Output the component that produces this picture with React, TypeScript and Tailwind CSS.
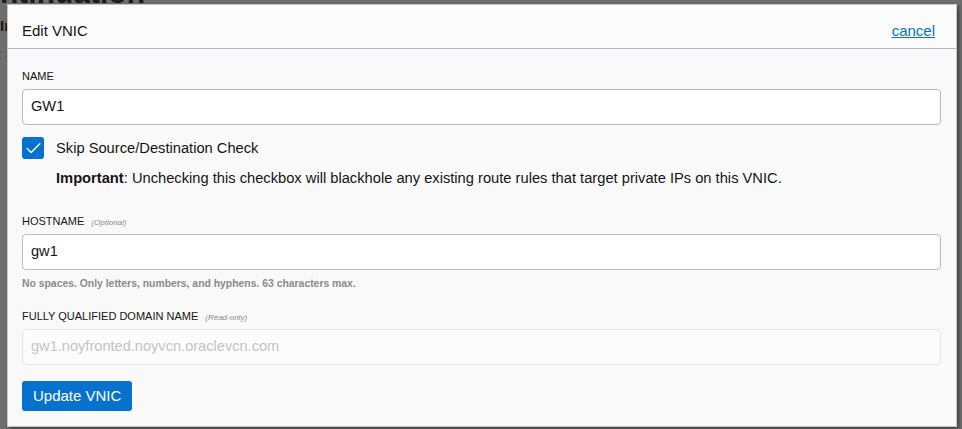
import { Check } from "lucide-react";

const font = { fontFamily: '"Liberation Sans", Arial, sans-serif' };

function Field({ label, note, children }: { label: string; note?: string; children: React.ReactNode }) {
  return (
    <div className="flex flex-col">
      <div className="flex items-baseline gap-[7px] h-4 leading-4">
        <span className="text-[11px] text-[#161513]">{label}</span>
        {note && <span className="text-[8px] italic text-[#8a8a8a]">{note}</span>}
      </div>
      <div className="mt-[5px]">{children}</div>
    </div>
  );
}

export default function App() {
  return (
    <div className="relative w-[962px] h-[429px] overflow-hidden bg-[#6f6f6f]" style={font}>
      {/* dimmed page behind the dialog */}
      <div className="flex flex-col text-[#1b1b1b] -ml-[40px]">
        <div className="text-[30px] font-bold leading-[30px] -mt-[22px]">Continuation</div>
        <div className="mt-[8px] text-[15px] font-bold leading-5">VNIC Information:</div>
        <div className="mt-[8px] text-[15px] leading-5 text-[#222]">OCID: ...aaaUI</div>
        <div className="mt-[3px] text-[15px] leading-5 text-[#222]">Start</div>
        <div className="mt-[3px] text-[15px] leading-5 text-[#222]">Micro</div>
        <div className="mt-[1px] text-[15px] font-bold leading-5">Info</div>
        <div className="mt-[8px] text-[15px] font-bold leading-5">Test</div>
        <div className="mt-[10px] text-[28px] font-bold leading-8">Bl</div>
        <div className="mt-[4px] text-[15px] font-bold leading-5">Note:</div>
      </div>

      {/* dialog */}
      <div className="absolute left-[7px] top-[4px] w-[950px] h-[423px] bg-[#f9f9f9] border border-[#c8c8c8] shadow-[2px_2px_4px_rgba(0,0,0,0.45)] flex flex-col">
        <div className="h-[44px] shrink-0 bg-[#fbfbfb] border-b border-[#b5bac6] flex items-center justify-between pl-[14px] pr-[21px] pt-[9px]">
          <span className="text-[15px] text-[#161513]">Edit VNIC</span>
          <a href="#" className="text-[15px] text-[#0572ce] underline">
            cancel
          </a>
        </div>

        <div className="flex flex-col pl-[14px] pr-[15px] pt-[19px]">
          <Field label="NAME">
            <div className="h-[36px] rounded-[4px] border border-[#b5bac6] bg-white flex items-center px-[8px] text-[14.6px] text-[#161513]">
              GW1
            </div>
          </Field>

          <div className="mt-[12px] flex items-center gap-[12px]">
            <div className="w-[22px] h-[22px] rounded-[3px] bg-[#0572ce] flex items-center justify-center">
              <Check className="w-[19px] h-[19px] text-white" strokeWidth={1.8} />
            </div>
            <span className="text-[14.7px] text-[#161513]">Skip Source/Destination Check</span>
          </div>
          <div className="mt-[11px] ml-[34px] text-[14.7px] leading-[17px] text-[#161513]">
            <span className="font-bold">Important</span>: Unchecking this checkbox will blackhole any existing route
            rules that target private IPs on this VNIC.
          </div>

          <div className="mt-[26px]">
            <Field label="HOSTNAME" note="(Optional)">
              <div className="h-[36px] rounded-[4px] border border-[#b5bac6] bg-white flex items-center px-[8px] text-[14.6px] text-[#161513]">
                gw1
              </div>
            </Field>
          </div>
          <div className="mt-[7px] text-[10.4px] leading-[14px] font-bold text-[#8a8a8a]">
            No spaces. Only letters, numbers, and hyphens. 63 characters max.
          </div>

          <div className="mt-[17px]">
            <Field label="FULLY QUALIFIED DOMAIN NAME" note="(Read-only)">
              <div className="h-[36px] rounded-[4px] border border-[#e6e6e6] bg-[#fcfcfc] flex items-center px-[8px] text-[14.6px] text-[#c4c4c4]">
                gw1.noyfronted.noyvcn.oraclevcn.com
              </div>
            </Field>
          </div>

          <div className="mt-[16px]">
            <button className="h-[30px] px-[11px] rounded-[3px] bg-[#0572ce] text-white text-[15px]">Update VNIC</button>
          </div>
        </div>
      </div>
    </div>
  );
}
